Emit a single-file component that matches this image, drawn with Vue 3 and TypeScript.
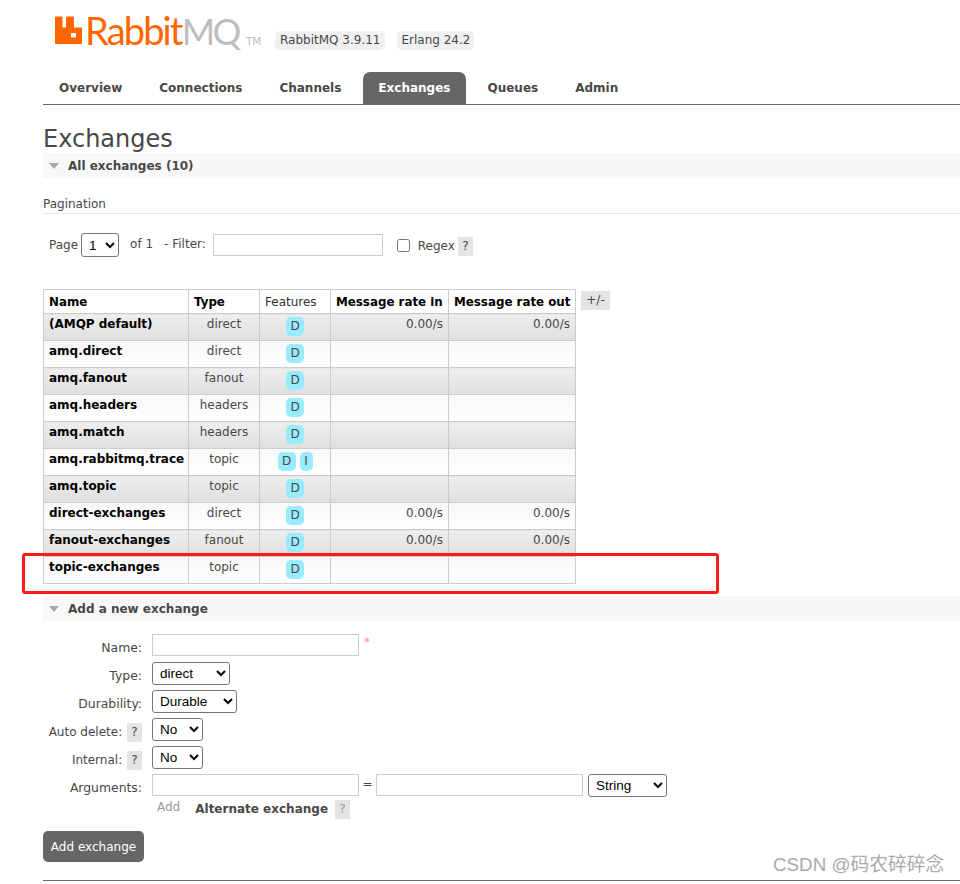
<script setup lang="ts">
interface Row { name: string; type: string; features: string[]; rateIn: string; rateOut: string }
const rows: Row[] = [
  { name: '(AMQP default)', type: 'direct', features: ['D'], rateIn: '0.00/s', rateOut: '0.00/s' },
  { name: 'amq.direct', type: 'direct', features: ['D'], rateIn: '', rateOut: '' },
  { name: 'amq.fanout', type: 'fanout', features: ['D'], rateIn: '', rateOut: '' },
  { name: 'amq.headers', type: 'headers', features: ['D'], rateIn: '', rateOut: '' },
  { name: 'amq.match', type: 'headers', features: ['D'], rateIn: '', rateOut: '' },
  { name: 'amq.rabbitmq.trace', type: 'topic', features: ['D', 'I'], rateIn: '', rateOut: '' },
  { name: 'amq.topic', type: 'topic', features: ['D'], rateIn: '', rateOut: '' },
  { name: 'direct-exchanges', type: 'direct', features: ['D'], rateIn: '0.00/s', rateOut: '0.00/s' },
  { name: 'fanout-exchanges', type: 'fanout', features: ['D'], rateIn: '0.00/s', rateOut: '0.00/s' },
  { name: 'topic-exchanges', type: 'topic', features: ['D'], rateIn: '', rateOut: '' },
]
const tabs = ['Overview', 'Connections', 'Channels', 'Exchanges', 'Queues', 'Admin']
</script>

<template>
  <div class="page">
    <header class="top">
      <div class="logo">
        <svg class="mark" width="27" height="28" viewBox="0 0 27 28">
          <path fill-rule="evenodd" fill="#ff6600" d="M0 1.5Q0 0.5 1 0.5H6.5Q7.5 0.5 7.5 1.5V11.5H11V1.5Q11 0.5 12 0.5H18Q19 0.5 19 1.5V11.5H26Q27 11.5 27 12.5V27Q27 28 26 28H1Q0 28 0 27ZM16 17V21.5H21V17Z" />
        </svg>
        <span class="rabbit">Rabbit</span><span class="mq">MQ</span><span class="tm">TM</span>
      </div>
      <span class="ver first">RabbitMQ 3.9.11</span>
      <span class="ver erl">Erlang 24.2</span>
    </header>

    <nav class="tabs">
      <a v-for="t in tabs" :key="t" class="tab" :class="{ active: t === 'Exchanges' }">{{ t }}</a>
    </nav>

    <h1 class="title">Exchanges</h1>
    <div class="section-head"><i class="tri"></i>All exchanges (10)</div>

    <div class="pag-title">Pagination</div>
    <div class="pag">
      <label class="p-page">Page</label>
      <select class="sel s-page"><option>1</option></select>
      <span class="p-of">of 1</span>
      <span class="p-filter">- Filter:</span>
      <input class="txt f-input" type="text" />
      <input class="chk" type="checkbox" />
      <span class="p-regex">Regex</span>
      <span class="help">?</span>
    </div>

    <div class="table-wrap">
      <table class="list">
        <colgroup>
          <col style="width:145px" /><col style="width:71px" /><col style="width:71px" /><col style="width:118px" /><col style="width:127px" />
        </colgroup>
        <thead>
          <tr>
            <th>Name</th>
            <th>Type</th>
            <th class="plain">Features</th>
            <th>Message rate in</th>
            <th>Message rate out</th>
          </tr>
        </thead>
        <tbody>
          <tr v-for="(r, i) in rows" :key="r.name" :class="i % 2 === 0 ? 'odd' : 'even'">
            <td class="name">{{ r.name }}</td>
            <td class="c">{{ r.type }}</td>
            <td class="c feat"><span v-for="f in r.features" :key="f" class="badge" :class="{ narrow: f === 'I' }">{{ f }}</span></td>
            <td class="r">{{ r.rateIn }}</td>
            <td class="r">{{ r.rateOut }}</td>
          </tr>
        </tbody>
      </table>
      <span class="plus">+/-</span>
      <div class="highlight"></div>
    </div>

    <div class="section-head add"><i class="tri"></i>Add a new exchange</div>

    <form class="form" @submit.prevent>
      <div class="f-label">Name:</div>
      <div class="f-field"><input class="txt wide" type="text" /><span class="req">*</span></div>

      <div class="f-label">Type:</div>
      <div class="f-field"><select class="sel s-type"><option>direct</option></select></div>

      <div class="f-label">Durability:</div>
      <div class="f-field"><select class="sel s-dur"><option>Durable</option></select></div>

      <div class="f-label with-help">Auto delete: <span class="help">?</span></div>
      <div class="f-field"><select class="sel s-no"><option>No</option></select></div>

      <div class="f-label with-help">Internal: <span class="help">?</span></div>
      <div class="f-field"><select class="sel s-no"><option>No</option></select></div>

      <div class="f-label">Arguments:</div>
      <div class="f-field">
        <input class="txt wide" type="text" /><span class="eq">=</span><input class="txt wide" type="text" />
        <select class="sel s-str"><option>String</option></select>
      </div>

      <div></div>
      <div class="f-extra">
        <span class="add-link">Add</span>
        <span class="alt">Alternate exchange</span>
        <span class="help dim">?</span>
      </div>
    </form>

    <button class="submit" type="button">Add exchange</button>
    <div class="rule"></div>
    <div class="mark-text">CSDN @码农碎碎念</div>
  </div>
</template>

<style>
html, body { background: #fff; }
</style>

<style scoped>
.page {
  position: relative;
  width: 960px;
  height: 884px;
  overflow: hidden;
  padding-left: 43px;
  box-sizing: border-box;
  font-family: "DejaVu Sans", Verdana, sans-serif;
  font-size: 12px;
  color: #484848;
  background: #fff;
}
.top {
  display: flex;
  align-items: flex-start;
  height: 72px;
  padding-left: 12px;
  box-sizing: border-box;
}
.logo {
  display: flex;
  align-items: baseline;
  width: 220px;
  height: 44px;
  padding-top: 16px;
  box-sizing: border-box;
  font-family: Lato, sans-serif;
  font-weight: 400;
  font-size: 38px;
  line-height: 28px;
}
.mark { flex: none; margin-right: 3px; align-self: flex-start; }
.rabbit { color: #ff6600; letter-spacing: -1.85px; }
.mq { color: #bdbdbd; font-size: 36px; letter-spacing: -2.5px; }
.tm {
  color: #bdbdbd;
  font-size: 10.5px;
  margin-left: 7px;
  font-family: "DejaVu Sans", sans-serif;
  line-height: 10px;
}
.ver {
  margin-top: 31px;
  height: 19px;
  line-height: 19px;
  padding: 0 5px;
  background: #f0f0f0;
  border-radius: 5px;
  white-space: nowrap;
  margin-left: 12px;
}
.ver.first { margin-left: 0; }
.ver.erl { padding: 0 4px; }

.tabs {
  display: flex;
  height: 33px;
  border-bottom: 1px solid #666;
  box-sizing: border-box;
}
.tab {
  padding: 0 16px;
  font-weight: 700;
  line-height: 33px;
  margin-right: 5px;
  white-space: nowrap;
}
.tab.active {
  background: #666;
  color: #fff;
  border-radius: 7px 7px 0 0;
  margin-left: 1px;
  padding-left: 15px;
}

.title {
  margin: 21px 0 0;
  padding-bottom: 1px;
  font-size: 24px;
  line-height: 26px;
  font-weight: 400;
  color: #484848;
}
.section-head {
  height: 25px;
  line-height: 26px;
  padding-left: 25px;
  background: #f8f8f8;
  font-weight: 700;
  position: relative;
  font-size: 12px;
}
.tri {
  position: absolute;
  left: 6px;
  top: 10px;
  width: 0;
  height: 0;
  border-left: 5.5px solid transparent;
  border-right: 5.5px solid transparent;
  border-top: 6px solid #aaa;
}
.pag-title {
  margin-top: 18px;
  height: 17px;
  line-height: 16px;
  border-bottom: 1px solid #e4e4e4;
}
.pag {
  display: flex;
  align-items: center;
  height: 30px;
  margin-top: 16px;
  padding-left: 6px;
}
.txt {
  border: 1px solid #ccc;
  height: 22px;
  box-sizing: border-box;
  padding: 0;
  margin: 0;
  background: #fff;
  outline: none;
}
.sel {
  height: 24px;
  box-sizing: border-box;
  font-family: "Liberation Sans", Arial, sans-serif;
  font-size: 13.5px;
  color: #000;
  background: #fff;
  border: 1px solid #767676;
  border-radius: 3px;
  margin: 0;
  padding-left: 3px;
}
.s-page { width: 38px; margin-left: 3px; }
.p-of { margin-left: 11px; margin-bottom: 2px; }
.p-filter { margin-left: 11px; margin-bottom: 2px; }
.f-input { width: 170px; margin-left: 7px; }
.chk { width: 13px; height: 13px; margin: 0 0 0 14px; }
.p-regex { margin-left: 8px; position: relative; top: 1px; }
.help {
  display: inline-block;
  width: 15px;
  height: 19px;
  line-height: 19px;
  text-align: center;
  background: #e4e4e4;
  color: #484848;
  margin-left: 3px;
}
.help.dim { color: #999; margin-left: 7px; }
.pag .help { position: relative; top: 1px; }

.table-wrap {
  position: relative;
  display: flex;
  align-items: flex-start;
  margin-top: 29px;
}
.list {
  border-collapse: collapse;
  table-layout: fixed;
  width: 533px;
}
.list th, .list td {
  border: 1px solid #ccc;
  padding: 0 5px;
  white-space: nowrap;
  box-sizing: border-box;
}
.list th {
  height: 24px;
  text-align: left;
  color: #000;
  font-weight: 700;
  font-size: 11.85px;
  background: #fff;
}
.list th.plain { font-weight: 400; color: #333; font-size: 12px; }
.list td {
  height: 27px;
  vertical-align: top;
  padding-top: 2px;
  line-height: 16px;
}
.odd td { background: linear-gradient(#eeeeee, #dfdfdf); }
.even td { background: linear-gradient(#f8f8f8, #ffffff); }
.list td.name { font-weight: 700; color: #000; font-size: 12px; letter-spacing: -0.02px; }
.list td.c { text-align: center; }
.list td.r { text-align: right; }
.list td.feat { padding-top: 3px; }
.badge {
  display: inline-block;
  width: 18px;
  height: 19px;
  line-height: 19px;
  background: #99ebff;
  border-radius: 5px;
  text-align: center;
  color: #484848;
}
.badge.narrow { width: 13px; margin-left: 4px; }
.plus {
  margin: 2px 0 0 5px;
  width: 29px;
  height: 19px;
  line-height: 19px;
  text-align: center;
  background: #e4e4e4;
  color: #484848;
}
.highlight {
  position: absolute;
  left: -21px;
  top: 264px;
  width: 697px;
  height: 41px;
  box-sizing: border-box;
  border: 3px solid #fb1d15;
  border-radius: 3px;
  pointer-events: none;
}

.section-head.add { margin-top: 12px; }

.form {
  display: grid;
  grid-template-columns: 99px 1fr;
  column-gap: 10px;
  margin-top: 13px;
  grid-auto-rows: min-content;
}
.f-label {
  text-align: right;
  height: 28px;
  padding-top: 5px;
  box-sizing: border-box;
  white-space: nowrap;
  line-height: 17px;
  margin-left: -10px;
  font-size: 12.4px;
}
.f-label.with-help { font-size: 12px; }
.f-label .help { margin-left: 1px; }
.f-field {
  display: flex;
  align-items: flex-start;
  height: 28px;
}
.f-field .sel { height: 23px; }
.wide { width: 207px; }
.req { color: #f99; margin-left: 5px; font-size: 12px; line-height: 16px; }
.eq { width: 17px; text-align: center; line-height: 20px; font-size: 12px; }
.s-type { width: 78px; }
.s-dur { width: 85px; }
.s-no { width: 51px; }
.s-str { width: 79px; margin-left: 5px; }
.f-extra {
  display: flex;
  align-items: center;
  height: 20px;
  margin-top: -3px;
}
.add-link { color: #999; margin-left: 5px; position: relative; top: -2px; }
.alt { font-weight: 700; margin-left: 15px; font-size: 12px; line-height: 22px; }

.submit {
  display: block;
  margin-top: 12px;
  width: 101px;
  height: 31px;
  border: 0;
  border-radius: 5px;
  background: #666;
  color: #fff;
  font-family: inherit;
  font-size: 12px;
  font-weight: 400;
  padding: 0;
}
.rule {
  height: 1px;
  background: #666;
  margin-top: 18px;
}
.mark-text {
  position: absolute;
  left: 773px;
  top: 853px;
  font-family: "Liberation Sans", "Noto Sans CJK SC", sans-serif;
  font-size: 18.8px;
  line-height: 24px;
  color: #aaa;
  white-space: nowrap;
}
</style>
